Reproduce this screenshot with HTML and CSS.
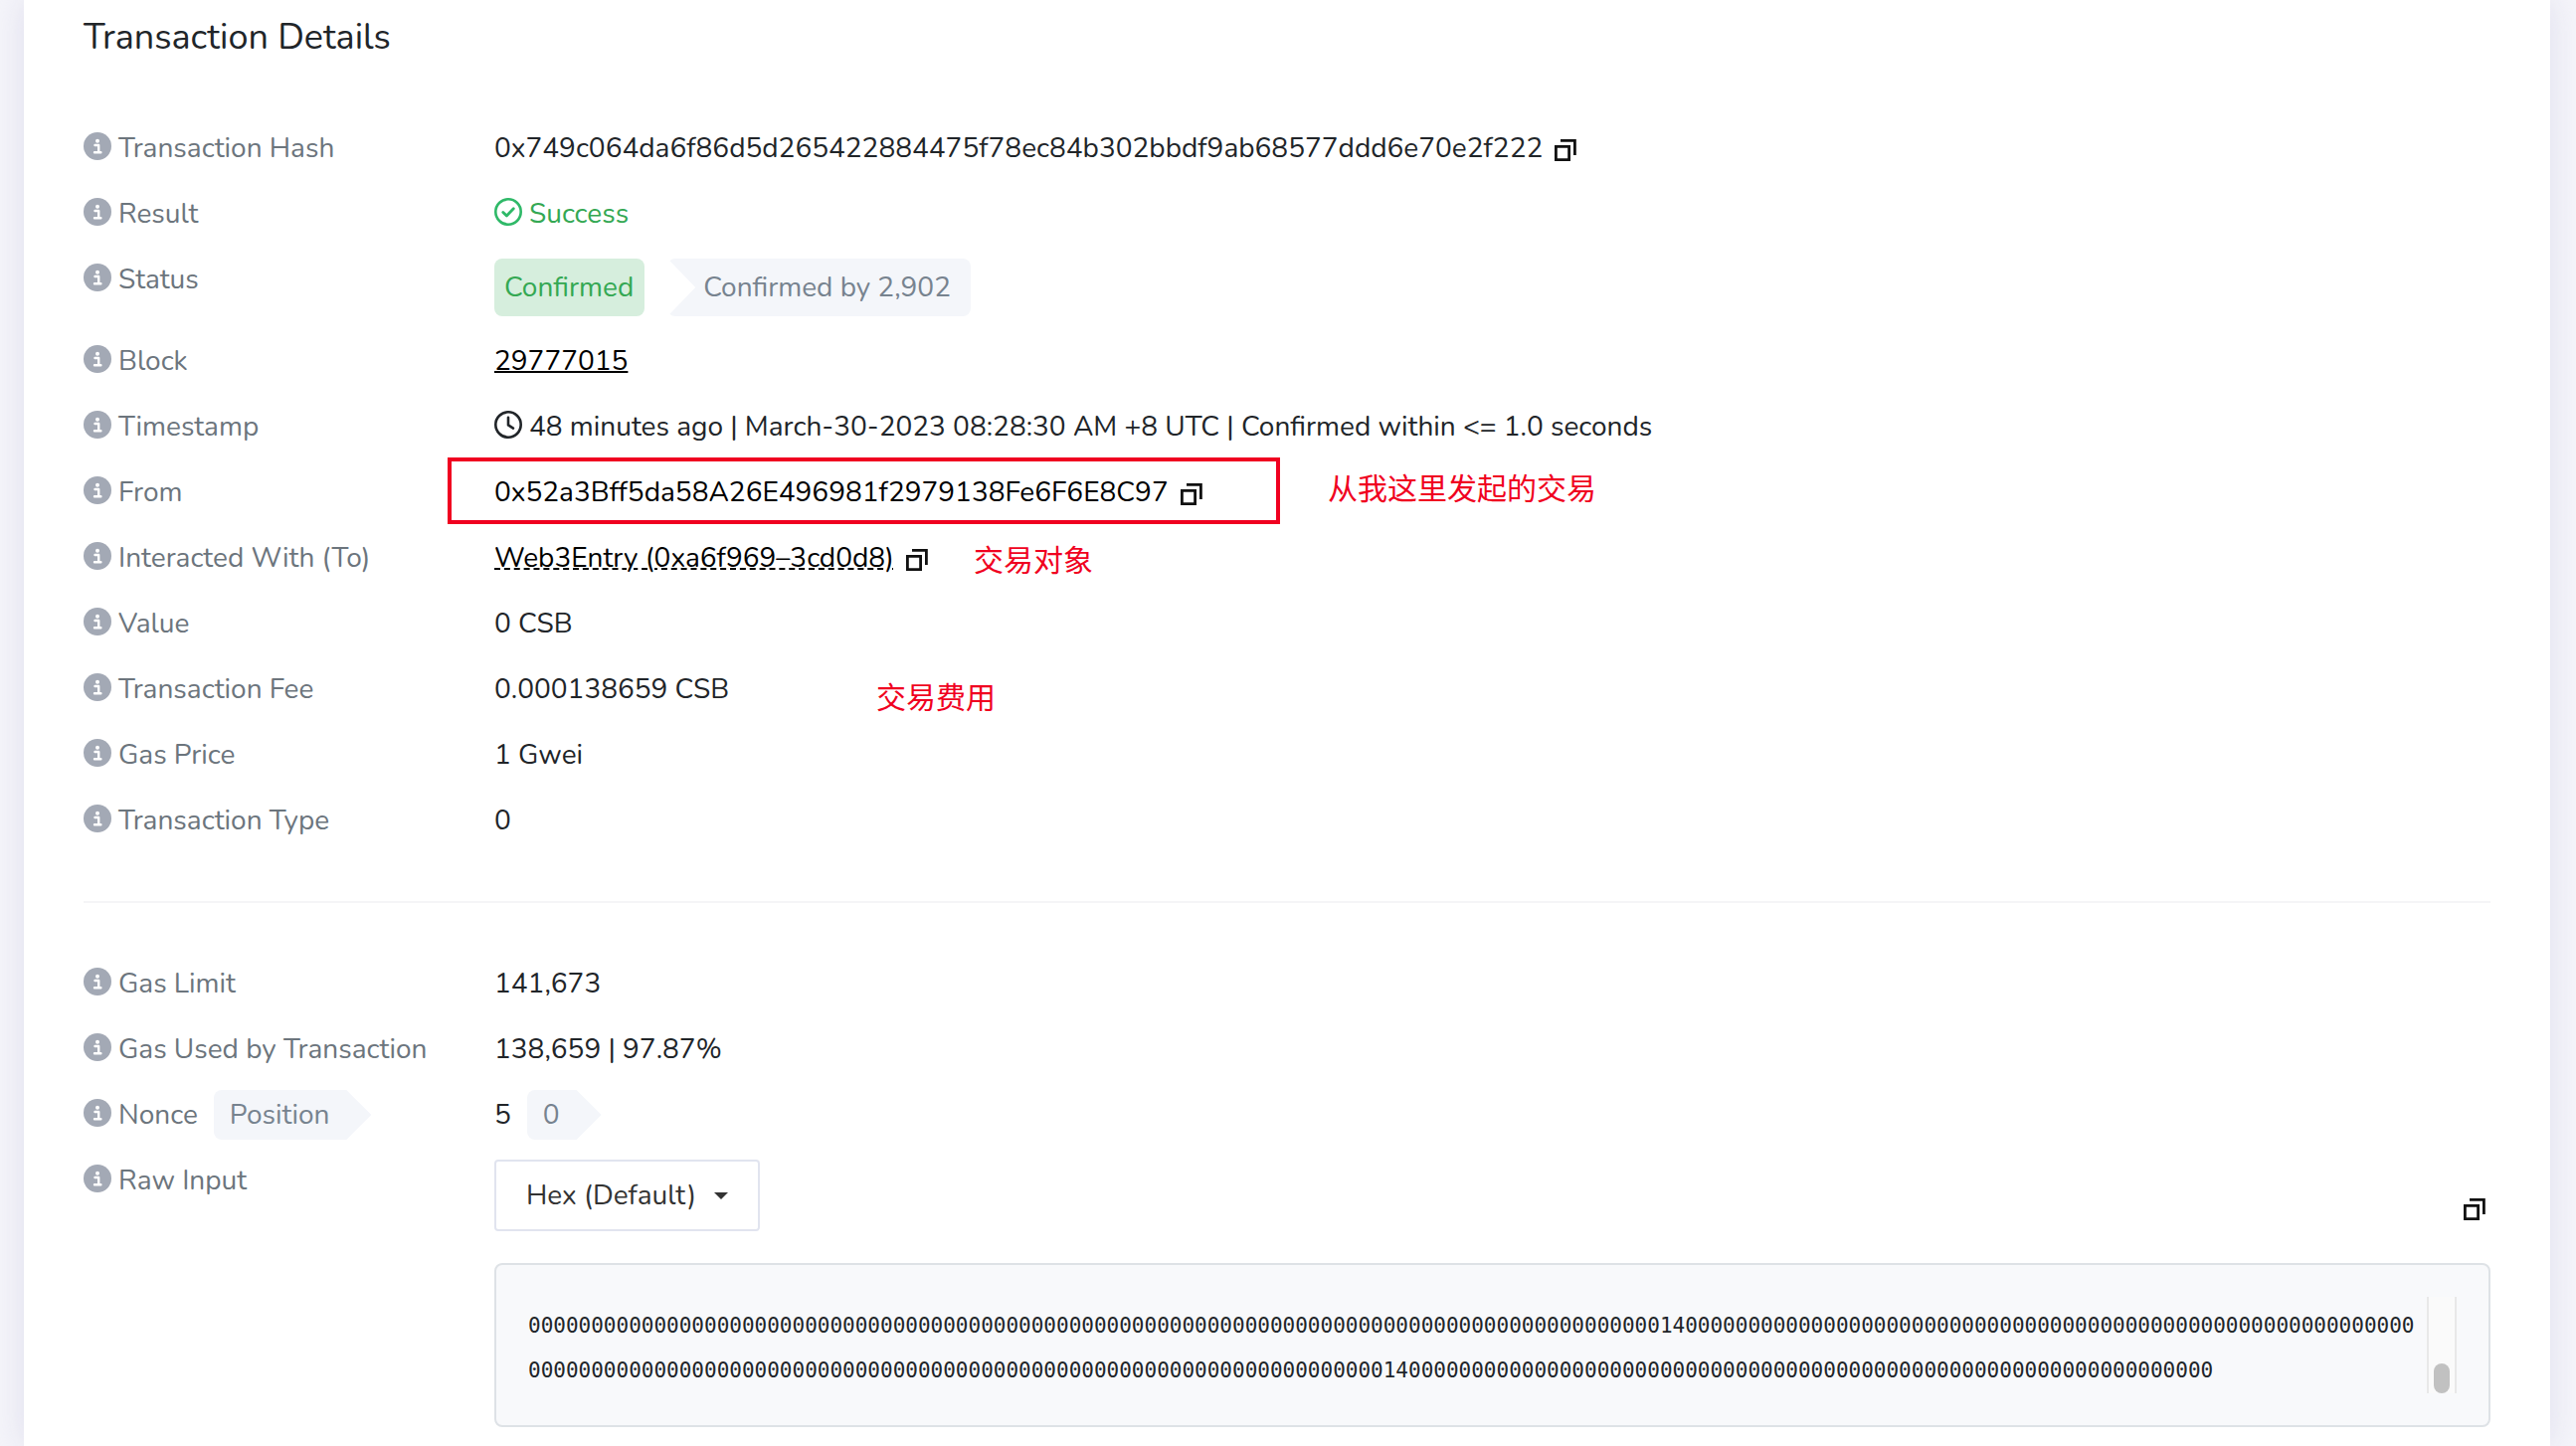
FILE: index.html
```html
<!DOCTYPE html>
<html lang="en">
<head>
<meta charset="utf-8">
<title>Transaction Details</title>
<link rel="stylesheet" href="styles.css">
</head>
<body>
<svg class="sprite" aria-hidden="true">
  <symbol id="i-info" viewBox="0 0 28 28">
    <circle cx="14" cy="14" r="14" fill="#a3a9b5"/>
    <circle cx="14" cy="8.8" r="2" fill="#fff"/>
    <path d="M11.5 13h3.7v7M11 20.2h6.4" fill="none" stroke="#fff" stroke-width="2.4" stroke-linecap="round" stroke-linejoin="round"/>
  </symbol>
  <symbol id="i-copy" viewBox="0 0 24 24">
    <path d="M2.4 8.4h13.2v13.2H2.4zM7 2.4h14.4V17" fill="none" stroke="#111" stroke-width="2.8"/>
  </symbol>
  <symbol id="i-check" viewBox="0 0 28 28">
    <circle cx="14" cy="14" r="12.7" fill="none" stroke="#2fb968" stroke-width="2.6"/>
    <path d="M8.8 14.4l3.6 3.6 6.9-7.2" fill="none" stroke="#2fb968" stroke-width="2.8" stroke-linecap="round" stroke-linejoin="round"/>
  </symbol>
  <symbol id="i-clock" viewBox="0 0 28 28">
    <circle cx="14" cy="14" r="12.7" fill="none" stroke="#212529" stroke-width="2.6"/>
    <path d="M14 6.8v7.6l5 3.2" fill="none" stroke="#212529" stroke-width="2.6" stroke-linecap="round" stroke-linejoin="round"/>
  </symbol>
</svg>

<main class="card">
  <h1 class="title">Transaction Details</h1>

  <dl class="list">
    <div class="row">
      <dt class="label"><svg class="icon"><use href="#i-info"/></svg>Transaction Hash</dt>
      <dd class="value">0x749c064da6f86d5d265422884475f78ec84b302bbdf9ab68577ddd6e70e2f222<button class="copy" type="button" aria-label="Copy transaction hash"><svg class="copy-icon"><use href="#i-copy"/></svg></button></dd>
    </div>
    <div class="row">
      <dt class="label"><svg class="icon"><use href="#i-info"/></svg>Result</dt>
      <dd class="value success"><svg class="icon"><use href="#i-check"/></svg>Success</dd>
    </div>
    <div class="row">
      <dt class="label"><svg class="icon"><use href="#i-info"/></svg>Status</dt>
      <dd class="value"><span class="chip chip-ok">Confirmed</span><span class="chip chip-by">Confirmed by 2,902</span></dd>
    </div>
    <div class="row">
      <dt class="label"><svg class="icon"><use href="#i-info"/></svg>Block</dt>
      <dd class="value"><a class="link" href="#block">29777015</a></dd>
    </div>
    <div class="row">
      <dt class="label"><svg class="icon"><use href="#i-info"/></svg>Timestamp</dt>
      <dd class="value"><svg class="icon"><use href="#i-clock"/></svg>48 minutes ago | March-30-2023 08:28:30 AM +8 UTC | Confirmed within &lt;= 1.0 seconds</dd>
    </div>
    <div class="row">
      <dt class="label"><svg class="icon"><use href="#i-info"/></svg>From</dt>
      <dd class="value"><a class="link plain" href="#from">0x52a3Bff5da58A26E496981f2979138Fe6F6E8C97</a><button class="copy" type="button" aria-label="Copy sender address"><svg class="copy-icon"><use href="#i-copy"/></svg></button><span class="frame"></span><span class="note note-from" lang="zh">从我这里发起的交易</span></dd>
    </div>
    <div class="row">
      <dt class="label"><svg class="icon"><use href="#i-info"/></svg>Interacted With (To)</dt>
      <dd class="value"><a class="link dashed" href="#to">Web3Entry (0xa6f969–3cd0d8)</a><button class="copy" type="button" aria-label="Copy contract address"><svg class="copy-icon"><use href="#i-copy"/></svg></button><span class="note note-to" lang="zh">交易对象</span></dd>
    </div>
    <div class="row">
      <dt class="label"><svg class="icon"><use href="#i-info"/></svg>Value</dt>
      <dd class="value">0 CSB</dd>
    </div>
    <div class="row">
      <dt class="label"><svg class="icon"><use href="#i-info"/></svg>Transaction Fee</dt>
      <dd class="value">0.000138659 CSB<span class="note note-fee" lang="zh">交易费用</span></dd>
    </div>
    <div class="row">
      <dt class="label"><svg class="icon"><use href="#i-info"/></svg>Gas Price</dt>
      <dd class="value">1 Gwei</dd>
    </div>
    <div class="row">
      <dt class="label"><svg class="icon"><use href="#i-info"/></svg>Transaction Type</dt>
      <dd class="value">0</dd>
    </div>
  </dl>

  <hr class="rule">

  <dl class="list">
    <div class="row">
      <dt class="label"><svg class="icon"><use href="#i-info"/></svg>Gas Limit</dt>
      <dd class="value">141,673</dd>
    </div>
    <div class="row">
      <dt class="label"><svg class="icon"><use href="#i-info"/></svg>Gas Used by Transaction</dt>
      <dd class="value">138,659 | 97.87%</dd>
    </div>
    <div class="row">
      <dt class="label"><svg class="icon"><use href="#i-info"/></svg>Nonce<span class="tag">Position</span></dt>
      <dd class="value">5<span class="tag">0</span></dd>
    </div>
    <div class="row">
      <dt class="label"><svg class="icon"><use href="#i-info"/></svg><label for="format">Raw Input</label></dt>
      <dd class="raw">
        <div class="raw-bar">
          <div class="picker">
            <select class="select" id="format"><option>Hex (Default)</option><option>UTF-8</option></select>
            <svg class="caret" viewBox="0 0 14 7"><path d="M0 0h14L7 7z" fill="#333"/></svg>
          </div>
          <button class="copy" type="button" aria-label="Copy raw input"><svg class="copy-icon"><use href="#i-copy"/></svg></button>
        </div>
        <div class="code">
          <pre class="hex">000000000000000000000000000000000000000000000000000000000000000000000000000000000000000000140000000000000000000000000000000000000000000000000000000000
00000000000000000000000000000000000000000000000000000000000000000000140000000000000000000000000000000000000000000000000000000000000000</pre>
          <div class="track"><div class="thumb"></div></div>
        </div>
      </dd>
    </div>
  </dl>
</main>
</body>
</html>
```
FILE: styles.css
```css
* {
  box-sizing: border-box;
}

body {
  margin: 0;
  padding: 0 26px 0 24px;
  background: #f5f5fa;
  color: #212529;
  font: 28px/42px Nunito, "Noto Sans", "Noto Sans CJK SC", sans-serif;
}

.sprite {
  position: absolute;
  width: 0;
  height: 0;
}

.card {
  min-height: 100vh;
  padding: 13px 60px 0;
  background: #fff;
  box-shadow: 0 0 30px 0 rgba(202, 199, 226, 0.5);
}

.title {
  margin: 0 0 53px;
  font-size: 36px;
  font-weight: 400;
  line-height: 50px;
}

.list,
.value,
.raw {
  margin: 0;
}

.row {
  display: grid;
  grid-template-columns: 413px minmax(0, 1fr);
  padding: 12px 0;
}

.label {
  display: flex;
  align-items: center;
  height: 42px;
  color: #6c757d;
}

.value {
  position: relative;
  display: flex;
  align-items: center;
  min-height: 42px;
}

.icon {
  flex: none;
  width: 28px;
  height: 28px;
  margin: 0 7px 4px 0;
}

.success {
  color: #34a853;
}

.copy {
  display: flex;
  flex: none;
  margin: 0 0 0 11px;
  padding: 3px 0 0;
  border: 0;
  background: none;
}

.copy-icon {
  width: 24px;
  height: 24px;
}

.link {
  color: #000;
  text-decoration: underline;
  text-decoration-thickness: 2px;
}

.plain {
  text-decoration: none;
}

.dashed {
  text-decoration-style: dashed;
}

.chip {
  padding: 8px 11px 8px 10px;
  border-radius: 8px;
}

.chip-ok {
  background: #d6eedd;
  color: #34a853;
}

.chip-by {
  margin-left: 23px;
  padding: 8px 20px 8px 36px;
  background: #f4f6fa;
  color: #77838f;
  clip-path: polygon(0 0, 100% 0, 100% 100%, 0 100%, 28px 50%);
}

.tag {
  margin: -4px 0 -4px 16px;
  padding: 4px 42px 4px 16px;
  border-radius: 8px;
  background: #f4f6fa;
  color: #77838f;
  clip-path: polygon(0 0, calc(100% - 25px) 0, 100% 50%, calc(100% - 25px) 100%, 0 100%);
}

/* Red annotations laid over the rows */
.frame {
  position: absolute;
  top: -14px;
  left: -47px;
  width: 837px;
  height: 67px;
  border: 4px solid #f00020;
}

.note {
  position: absolute;
  color: #f00020;
  font: 30px/42px "Noto Sans CJK SC", sans-serif;
  white-space: nowrap;
}

.note-from {
  top: -6px;
  left: 838px;
}

.note-to {
  top: 0;
  left: 482px;
}

.note-fee {
  top: 6px;
  left: 384px;
}

.rule {
  height: 2px;
  margin: 48px 0;
  border: 0;
  background: #f5f5f7;
}

.raw-bar {
  display: flex;
  align-items: center;
  justify-content: space-between;
  margin-bottom: 32px;
  padding-right: 4px;
}

.raw-bar .copy {
  padding-top: 28px;
}

.picker {
  position: relative;
}

.select {
  display: block;
  height: 72px;
  padding: 0 61px 0 30px;
  border: 2px solid #e1e4ef;
  border-radius: 4px;
  background: #fff;
  color: #333;
  font: inherit;
  appearance: none;
}

.caret {
  position: absolute;
  top: 33px;
  right: 32px;
  width: 14px;
  height: 7px;
  pointer-events: none;
}

.code {
  display: flex;
  justify-content: space-between;
  padding: 32px;
  border: 2px solid #dee2e6;
  border-radius: 8px;
  background: #f8f9fb;
}

.hex {
  margin: 0;
  padding: 7px 0 0;
  overflow: hidden;
  font: 21px/45px "DejaVu Sans Mono", monospace;
}

.track {
  display: flex;
  flex: none;
  align-items: flex-end;
  justify-content: center;
  width: 30px;
  border: 2px solid #e8e8e8;
  border-width: 0 2px;
  background: #fafafa;
}

.thumb {
  width: 16px;
  height: 30px;
  border-radius: 8px;
  background: #c1c1c1;
}
```
